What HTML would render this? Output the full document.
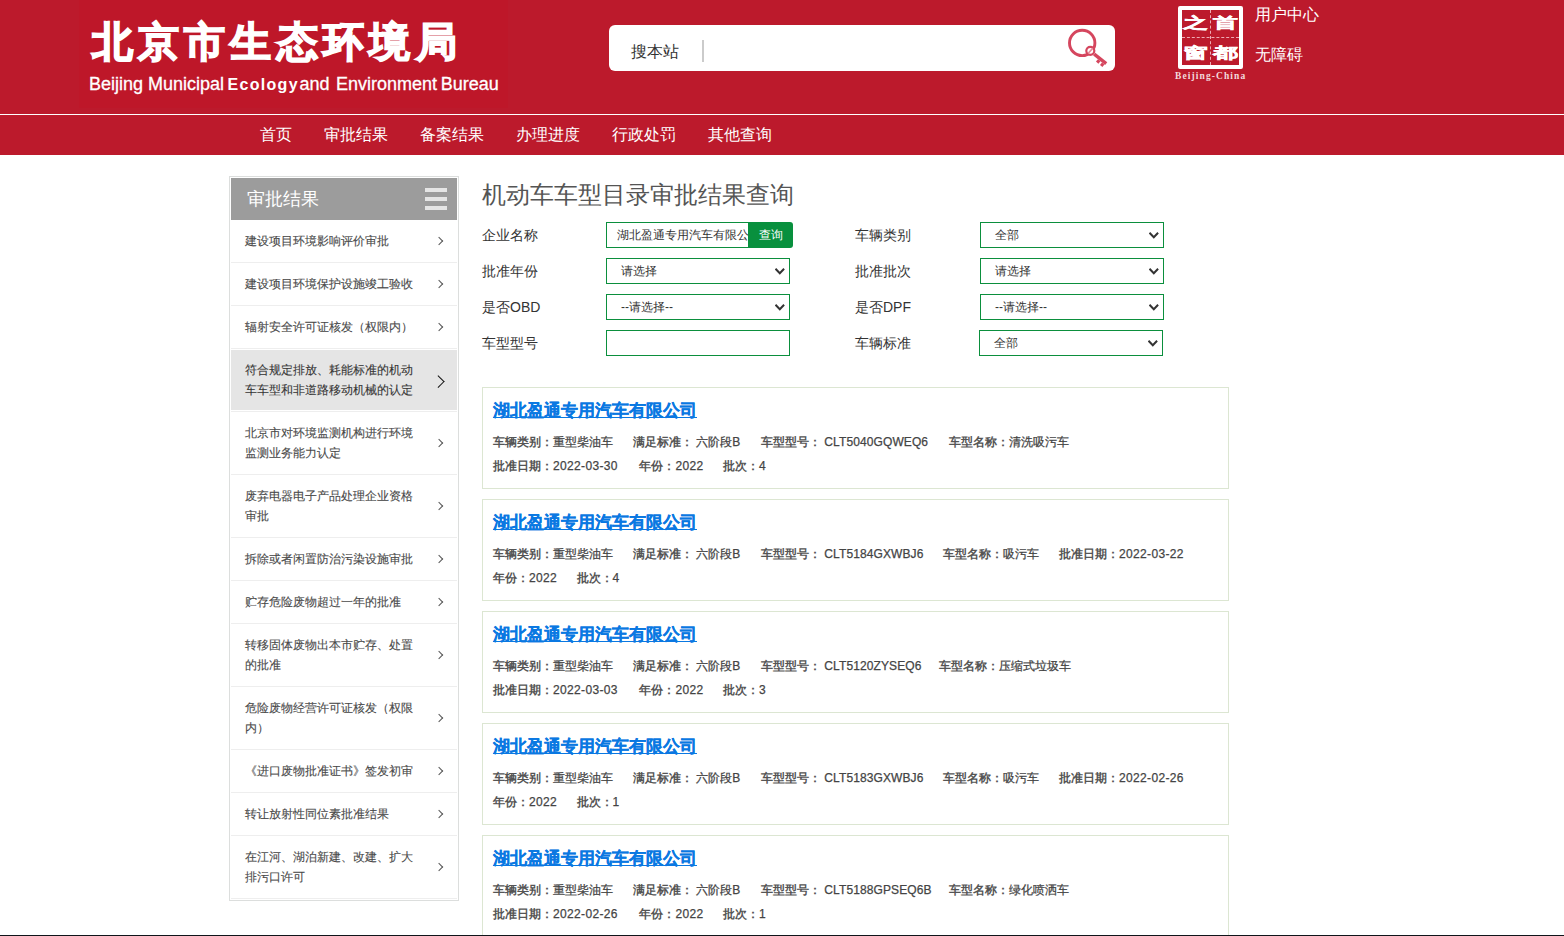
<!DOCTYPE html>
<html><head><meta charset="utf-8">
<style>
*{margin:0;padding:0;box-sizing:border-box}
html,body{width:1564px;height:936px;overflow:hidden;background:#fff}
body{font-family:"Liberation Sans",sans-serif;position:relative;color:#333}
.abs{position:absolute}
#hdr{left:0;top:0;width:1564px;height:155px;background:#BC1A2C}
#logo{left:79px;top:0;width:429px;height:108px;background:#BE1729}
#hline{left:0;top:114px;width:1564px;height:1px;background:#fff}
.cn{white-space:nowrap}
#t1{left:91.5px;top:14px;font-size:41px;font-weight:bold;-webkit-text-stroke:1.6px #fff;color:#fff;letter-spacing:5.3px;line-height:56px}
#t2{left:89px;top:74px;font-size:18px;color:#fff;line-height:20px;white-space:nowrap;-webkit-text-stroke:0.3px #fff}
#t2 span{position:absolute;top:0}
#search{left:609px;top:25px;width:506px;height:46px;background:#fff;border-radius:6px}
#stext{left:631px;top:41px;font-size:16px;color:#333;line-height:22px}
#ssep{left:702px;top:40px;width:2px;height:22px;background:#CBCBCB}
.bjc{font-family:"Liberation Serif",serif;font-weight:bold;font-size:26px;line-height:26px;color:#fff;transform:scale(0.95,0.57);transform-origin:0 0;-webkit-text-stroke:0.8px #fff}
#ucenter{left:1255px;top:5px;font-size:16px;color:#fff;line-height:20px}
#wza{left:1255px;top:45px;font-size:16px;color:#fff;line-height:20px}
#nav{left:244px;top:115px;height:40px}
#nav span{float:left;padding:0 16px;font-size:16px;color:#fff;line-height:40px}
#side{left:229px;top:176px;width:230px;height:725px;border:1px solid #DCDEDD;padding:1px}
#sh{height:42px;background:#9C9C9C;position:relative}
#sh .t{position:absolute;left:16px;top:10px;font-size:18px;color:#fff;line-height:22px}
#sh i{position:absolute;left:194px;width:22px;height:4px;background:#E5E5E5}
.it{position:relative;border-bottom:1px solid #EEE;padding:11px 40px 11px 14px;font-size:12px;line-height:20px;color:#4a4a4a;-webkit-text-stroke:0.12px #4a4a4a}
.it b{position:absolute;right:15px;top:50%;width:6px;height:6px;margin-top:-3px;border-right:1px solid #555;border-top:1px solid #555;transform:rotate(45deg)}
.it.on{background:#E5E5E5;color:#333;box-shadow:inset 0 1px 0 #fff,inset 0 -1px 0 #fff}
.it.on b{width:8.5px;height:8.5px;margin-top:-3.5px;right:15px;border-color:#111;border-width:1.6px}
h1{left:482px;top:180px;font-size:24px;font-weight:normal;color:#555;line-height:30px}
.lbl{font-size:14px;color:#333;line-height:20px}
.inp{border:1px solid #0B8F3D;background:#fff;height:26px}
.sel{border:1px solid #0B8F3D;background:#fff;height:26px;font-size:12px;line-height:24px;padding-left:14px;color:#333}
.sel svg{position:absolute;right:4.5px;top:8.5px}
.card{left:482px;width:747px;height:102px;border:1px solid #DCE6D2;padding:0 10px}
.card .ttl{position:absolute;left:10px;top:11px;font-size:17px;font-weight:bold;color:#0A78E2;-webkit-text-stroke:0.2px #0A78E2;text-decoration:underline;line-height:24px}
.card .r{position:absolute;font-size:12px;line-height:18px;color:#444;white-space:nowrap;-webkit-text-stroke:0.25px #444}
.card .r i{font-style:normal;letter-spacing:0.35px}
.card .r i.m{letter-spacing:0.1px}
.card .r em{font-style:normal;font-weight:bold;color:#555;-webkit-text-stroke:0;letter-spacing:0}
#bot{left:0;top:935px;width:1564px;height:1px;background:#10141a}
</style></head><body>
<div id="hdr" class="abs"></div>
<div id="logo" class="abs"></div>
<div id="hline" class="abs"></div>
<div id="t1" class="abs cn">北京市生态环境局</div>
<div id="t2" class="abs"><span style="left:0">Beijing Municipal</span><span id="eco" style="left:138.5px;top:0.5px;font-size:16px;font-weight:bold;letter-spacing:1.3px;-webkit-text-stroke:0">Ecology</span><span style="left:210.5px">and</span><span style="left:247px">Environment</span><span style="left:351.7px">Bureau</span></div>
<div id="search" class="abs"></div>
<div id="stext" class="abs cn">搜本站</div>
<div id="ssep" class="abs"></div>
<svg class="abs" style="left:1060px;top:25px" width="55" height="46" viewBox="1060 25 55 46">
<circle cx="1082.2" cy="42.9" r="12.7" fill="none" stroke="#D5465E" stroke-width="2.9"/>
<circle cx="1090.3" cy="50.8" r="4" fill="#fff" stroke="#D5465E" stroke-width="2.2"/>
<path d="M1088.3 53.2 L1092.6 48.4" stroke="#E58C9B" stroke-width="1.6" fill="none"/>
<path d="M1094.2 54.2 L1106.2 63.6" stroke="#D5465E" stroke-width="3.4" fill="none"/>
<rect x="1096.6" y="59.8" width="3.2" height="3.2" transform="rotate(40 1098.2 61.4)" fill="#D5465E"/>
<rect x="1100.6" y="63.2" width="3.2" height="3.2" transform="rotate(40 1102.2 64.8)" fill="#D5465E"/>
</svg>
<div class="abs" style="left:1178px;top:6px;width:65px;height:63px;border:4px solid #fff;border-radius:2px"></div>
<div class="abs" style="left:1210px;top:10px;width:0;height:55px;border-left:1px dashed rgba(255,220,225,.75)"></div>
<div class="abs" style="left:1182px;top:37px;width:57px;height:0;border-top:1px dashed rgba(255,220,225,.75)"></div>
<div class="abs bjc" style="left:1183px;top:16px">之</div>
<div class="abs bjc" style="left:1213px;top:16px">首</div>
<div class="abs bjc" style="left:1183px;top:46px">窗</div>
<div class="abs bjc" style="left:1213px;top:46px">都</div>
<div class="abs" style="left:1175px;top:70px;font-family:'Liberation Serif',serif;font-weight:bold;font-size:9.5px;line-height:12px;color:#F3D9DC;letter-spacing:1.1px;white-space:nowrap">Beijing-China</div>
<div id="ucenter" class="abs cn">用户中心</div>
<div id="wza" class="abs cn">无障碍</div>
<div id="nav" class="abs cn"><span>首页</span><span>审批结果</span><span>备案结果</span><span>办理进度</span><span>行政处罚</span><span>其他查询</span></div>
<div id="side" class="abs">
<div id="sh"><span class="t cn">审批结果</span><i style="top:10px"></i><i style="top:19px"></i><i style="top:28px"></i></div>
<div class="it">建设项目环境影响评价审批<b></b></div>
<div class="it">建设项目环境保护设施竣工验收<b></b></div>
<div class="it">辐射安全许可证核发（权限内）<b></b></div>
<div class="it on">符合规定排放、耗能标准的机动车车型和非道路移动机械的认定<b></b></div>
<div class="it">北京市对环境监测机构进行环境监测业务能力认定<b></b></div>
<div class="it">废弃电器电子产品处理企业资格审批<b></b></div>
<div class="it">拆除或者闲置防治污染设施审批<b></b></div>
<div class="it">贮存危险废物超过一年的批准<b></b></div>
<div class="it">转移固体废物出本市贮存、处置的批准<b></b></div>
<div class="it">危险废物经营许可证核发（权限内）<b></b></div>
<div class="it">《进口废物批准证书》签发初审<b></b></div>
<div class="it">转让放射性同位素批准结果<b></b></div>
<div class="it">在江河、湖泊新建、改建、扩大排污口许可<b></b></div>
</div>
<h1 class="abs cn">机动车车型目录审批结果查询</h1>
<div class="abs lbl cn" style="left:482px;top:225px">企业名称</div>
<div class="abs lbl cn" style="left:482px;top:261px">批准年份</div>
<div class="abs lbl cn" style="left:482px;top:297px">是否OBD</div>
<div class="abs lbl cn" style="left:482px;top:333px">车型型号</div>
<div class="abs lbl cn" style="left:855px;top:225px">车辆类别</div>
<div class="abs lbl cn" style="left:855px;top:261px">批准批次</div>
<div class="abs lbl cn" style="left:855px;top:297px">是否DPF</div>
<div class="abs lbl cn" style="left:855px;top:333px">车辆标准</div>
<div class="abs inp" style="left:606px;top:222px;width:142px;overflow:hidden;font-size:12px;line-height:22px;padding-left:10px;color:#333;white-space:nowrap;border-right:none;line-height:24px">湖北盈通专用汽车有限公司</div>
<div class="abs cn" style="left:748px;top:222px;width:45px;height:26px;background:#08903E;border-radius:0 3px 3px 0;color:#fff;font-size:12px;line-height:27px;text-align:center">查询</div>
<div class="abs sel cn" style="left:606px;top:258px;width:184px">请选择<svg width="10" height="7" viewBox="0 0 10 7"><polyline points="0.5,0.8 4.8,5.2 9.1,0.8" fill="none" stroke="#333" stroke-width="2"/></svg></div>
<div class="abs sel cn" style="left:606px;top:294px;width:184px">--请选择--<svg width="10" height="7" viewBox="0 0 10 7"><polyline points="0.5,0.8 4.8,5.2 9.1,0.8" fill="none" stroke="#333" stroke-width="2"/></svg></div>
<div class="abs inp" style="left:606px;top:330px;width:184px"></div>
<div class="abs sel cn" style="left:980px;top:222px;width:184px">全部<svg width="10" height="7" viewBox="0 0 10 7"><polyline points="0.5,0.8 4.8,5.2 9.1,0.8" fill="none" stroke="#333" stroke-width="2"/></svg></div>
<div class="abs sel cn" style="left:980px;top:258px;width:184px">请选择<svg width="10" height="7" viewBox="0 0 10 7"><polyline points="0.5,0.8 4.8,5.2 9.1,0.8" fill="none" stroke="#333" stroke-width="2"/></svg></div>
<div class="abs sel cn" style="left:980px;top:294px;width:184px">--请选择--<svg width="10" height="7" viewBox="0 0 10 7"><polyline points="0.5,0.8 4.8,5.2 9.1,0.8" fill="none" stroke="#333" stroke-width="2"/></svg></div>
<div class="abs sel cn" style="left:979px;top:330px;width:184px">全部<svg width="10" height="7" viewBox="0 0 10 7"><polyline points="0.5,0.8 4.8,5.2 9.1,0.8" fill="none" stroke="#333" stroke-width="2"/></svg></div>
<div class="abs card" style="top:387px"><div class="ttl cn">湖北盈通专用汽车有限公司</div><span class="r" style="left:10px;top:45px"><em>车辆类别：</em>重型柴油车</span><span class="r" style="left:150px;top:45px"><em>满足标准：</em>&nbsp;六阶段<i>B</i></span><span class="r" style="left:278px;top:45px"><em>车型型号：</em>&nbsp;<i class="m">CLT5040GQWEQ6</i></span><span class="r" style="left:466px;top:45px"><em>车型名称：</em>清洗吸污车</span><span class="r" style="left:10px;top:69px"><em>批准日期：</em><i>2022-03-30</i></span><span class="r" style="left:156.4px;top:69px"><em>年份：</em><i>2022</i></span><span class="r" style="left:240px;top:69px"><em>批次：</em><i>4</i></span></div>
<div class="abs card" style="top:499px"><div class="ttl cn">湖北盈通专用汽车有限公司</div><span class="r" style="left:10px;top:45px"><em>车辆类别：</em>重型柴油车</span><span class="r" style="left:150px;top:45px"><em>满足标准：</em>&nbsp;六阶段<i>B</i></span><span class="r" style="left:278px;top:45px"><em>车型型号：</em>&nbsp;<i class="m">CLT5184GXWBJ6</i></span><span class="r" style="left:460.3px;top:45px"><em>车型名称：</em>吸污车</span><span class="r" style="left:576px;top:45px"><em>批准日期：</em><i>2022-03-22</i></span><span class="r" style="left:10px;top:69px"><em>年份：</em><i>2022</i></span><span class="r" style="left:93.6px;top:69px"><em>批次：</em><i>4</i></span></div>
<div class="abs card" style="top:611px"><div class="ttl cn">湖北盈通专用汽车有限公司</div><span class="r" style="left:10px;top:45px"><em>车辆类别：</em>重型柴油车</span><span class="r" style="left:150px;top:45px"><em>满足标准：</em>&nbsp;六阶段<i>B</i></span><span class="r" style="left:278px;top:45px"><em>车型型号：</em>&nbsp;<i class="m">CLT5120ZYSEQ6</i></span><span class="r" style="left:456.1px;top:45px"><em>车型名称：</em>压缩式垃圾车</span><span class="r" style="left:10px;top:69px"><em>批准日期：</em><i>2022-03-03</i></span><span class="r" style="left:156.4px;top:69px"><em>年份：</em><i>2022</i></span><span class="r" style="left:240px;top:69px"><em>批次：</em><i>3</i></span></div>
<div class="abs card" style="top:723px"><div class="ttl cn">湖北盈通专用汽车有限公司</div><span class="r" style="left:10px;top:45px"><em>车辆类别：</em>重型柴油车</span><span class="r" style="left:150px;top:45px"><em>满足标准：</em>&nbsp;六阶段<i>B</i></span><span class="r" style="left:278px;top:45px"><em>车型型号：</em>&nbsp;<i class="m">CLT5183GXWBJ6</i></span><span class="r" style="left:460.3px;top:45px"><em>车型名称：</em>吸污车</span><span class="r" style="left:576px;top:45px"><em>批准日期：</em><i>2022-02-26</i></span><span class="r" style="left:10px;top:69px"><em>年份：</em><i>2022</i></span><span class="r" style="left:93.6px;top:69px"><em>批次：</em><i>1</i></span></div>
<div class="abs card" style="top:835px"><div class="ttl cn">湖北盈通专用汽车有限公司</div><span class="r" style="left:10px;top:45px"><em>车辆类别：</em>重型柴油车</span><span class="r" style="left:150px;top:45px"><em>满足标准：</em>&nbsp;六阶段<i>B</i></span><span class="r" style="left:278px;top:45px"><em>车型型号：</em>&nbsp;<i class="m">CLT5188GPSEQ6B</i></span><span class="r" style="left:465.9px;top:45px"><em>车型名称：</em>绿化喷洒车</span><span class="r" style="left:10px;top:69px"><em>批准日期：</em><i>2022-02-26</i></span><span class="r" style="left:156.4px;top:69px"><em>年份：</em><i>2022</i></span><span class="r" style="left:240px;top:69px"><em>批次：</em><i>1</i></span></div>
<div id="bot" class="abs"></div>
</body></html>
